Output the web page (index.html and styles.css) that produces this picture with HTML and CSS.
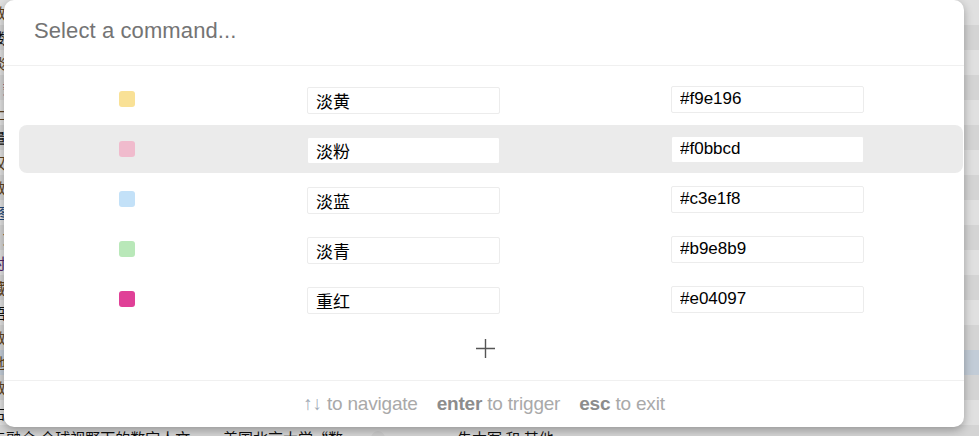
FILE: index.html
```html
<!DOCTYPE html>
<html lang="zh">
<head>
<meta charset="utf-8">
<title>Command palette</title>
<link rel="stylesheet" href="styles.css">
</head>
<body>
<div class="page">
  <div class="prow"><span class="c-title t-brown">数字人文研究方法与实践</span><span class="c-auth">王晓光</span><span class="c-dot"></span><span class="c-names">王晓光 和 其他</span></div>
  <div class="prow"><span class="c-title">[数据] 古籍文本挖掘</span><span class="c-auth">刘石</span><span class="c-dot"></span><span class="c-names">刘石</span></div>
  <div class="prow"><span class="c-title t-brown">淡化与重构：历史地理信息</span><span class="c-auth">陈刚</span><span class="c-dot"></span><span class="c-names">陈刚</span></div>
  <div class="prow"><span class="c-title t-purple">1 数字图书馆建设</span><span class="c-auth">赵生辉</span><span class="c-dot"></span><span class="c-names">赵生辉</span></div>
  <div class="prow"><span class="c-title t-brown">上海图书馆家谱知识服务</span><span class="c-auth">夏翠娟</span><span class="c-dot"></span><span class="c-names">夏翠娟</span></div>
  <div class="prow"><span class="c-title">量化历史研究导论</span><span class="c-auth">梁晨</span><span class="c-dot"></span><span class="c-names">梁晨</span></div>
  <div class="prow"><span class="c-title t-brown">汉字字形数据库</span><span class="c-auth">李国英</span><span class="c-dot"></span><span class="c-names">李国英</span></div>
  <div class="prow"><span class="c-title t-brown">数字人文视野下的文学</span><span class="c-auth">郑永晓</span><span class="c-dot"></span><span class="c-names">郑永晓</span></div>
  <div class="prow"><span class="c-title t-blue">[图] 古地图数字化</span><span class="c-auth">林宗毅</span><span class="c-dot"></span><span class="c-names">林宗毅</span></div>
  <div class="prow"><span class="c-title t-brown">1 文本计量与风格</span><span class="c-auth">黄水清</span><span class="c-dot"></span><span class="c-names">黄水清</span></div>
  <div class="prow"><span class="c-title t-purple">时空数据可视化</span><span class="c-auth">王军</span><span class="c-dot"></span><span class="c-names">王军 和 其他</span></div>
  <div class="prow"><span class="c-title t-brown">藏书印数据库</span><span class="c-auth">苏芳</span><span class="c-dot"></span><span class="c-names">苏芳</span></div>
  <div class="prow"><span class="c-title">语料库与社会网络</span><span class="c-auth">金观涛</span><span class="c-dot"></span><span class="c-names">金观涛</span></div>
  <div class="prow"><span class="c-title t-brown">数据驱动的人文研究</span><span class="c-auth">冯惠玲</span><span class="c-dot"></span><span class="c-names">冯惠玲</span></div>
  <div class="prow sel"><span class="c-title t-brown">地方志数字整理</span><span class="c-auth">包平</span><span class="c-dot"></span><span class="c-names">包平</span></div>
  <div class="prow"><span class="c-title t-brown">数字人文教育</span><span class="c-auth">朱本军</span><span class="c-dot"></span><span class="c-names">朱本军</span></div>
  <div class="prow"><span class="c-title">古典文献知识图谱</span><span class="c-auth">欧阳剑</span><span class="c-dot"></span><span class="c-names">欧阳剑</span></div>
  <div class="prow"><span class="c-title">与融合:全球视野下的数字人文</span><span class="c-auth">美国北京大学“数</span><span class="c-dot"></span><span class="c-names">朱本军 和 其他</span></div>
</div>
<div class="overlay"></div>

<div class="palette">
  <div class="pal-head">
    <input class="pal-input" type="text" placeholder="Select a command...">
  </div>
  <div class="pal-list">
    <div class="crow">
      <span class="swatch" style="background:#f9e196"></span>
      <input class="field field-name" type="text" value="淡黄">
      <input class="field" type="text" value="#f9e196">
    </div>
    <div class="crow active">
      <span class="swatch" style="background:#f0bbcd"></span>
      <input class="field field-name" type="text" value="淡粉">
      <input class="field" type="text" value="#f0bbcd">
    </div>
    <div class="crow">
      <span class="swatch" style="background:#c3e1f8"></span>
      <input class="field field-name" type="text" value="淡蓝">
      <input class="field" type="text" value="#c3e1f8">
    </div>
    <div class="crow">
      <span class="swatch" style="background:#b9e8b9"></span>
      <input class="field field-name" type="text" value="淡青">
      <input class="field" type="text" value="#b9e8b9">
    </div>
    <div class="crow">
      <span class="swatch" style="background:#e04097"></span>
      <input class="field field-name" type="text" value="重红">
      <input class="field" type="text" value="#e04097">
    </div>
    <div class="add">
      <svg class="plus" width="21" height="21" viewBox="0 0 21 21" aria-hidden="true">
        <path d="M10.5 1 V20 M1 10.5 H20" stroke="#555" stroke-width="1.4" fill="none"/>
      </svg>
    </div>
  </div>
  <div class="pal-foot">
    <span class="hint"><span class="arrows">↑↓</span> to navigate</span>
    <span class="hint"><b>enter</b> to trigger</span>
    <span class="hint"><b>esc</b> to exit</span>
  </div>
</div>
</body>
</html>
```

FILE: styles.css
```css
html, body {
  margin: 0;
  padding: 0;
}
body {
  width: 979px;
  height: 436px;
  overflow: hidden;
  position: relative;
  background: #ffffff;
  font-family: "Liberation Sans", "Noto Sans CJK SC", sans-serif;
}

/* background page */
.page {
  display: flex;
  flex-direction: column;
}
.prow {
  height: 25px;
  display: flex;
  align-items: center;
  white-space: nowrap;
  font-family: "Noto Sans CJK SC", sans-serif;
  font-size: 15px;
  color: #111;
}
.prow:nth-child(even) { background: #f2f2f2; }
.prow.sel { background: #dde9f5; }
.c-title {
  width: 232px;
  margin-left: -9px;
  overflow: hidden;
}
.t-brown { color: #6a4a22; }
.t-purple { color: #5a2a78; }
.t-blue { color: #24508a; }
.c-auth { width: 148px; }
.c-dot {
  width: 14px;
  height: 14px;
  border-radius: 50%;
  background: #e8e8e8;
  margin-right: 72px;
}
.overlay {
  position: absolute;
  inset: 0;
  background: rgba(0, 0, 0, 0.12);
}

/* palette */
.palette {
  position: absolute;
  left: 4px;
  top: 0;
  width: 960px;
  height: 427px;
  background: #fff;
  border-radius: 10px;
  box-shadow: 0 3px 10px rgba(0, 0, 0, 0.3);
  display: flex;
  flex-direction: column;
  overflow: hidden;
}
.pal-head {
  flex: none;
  height: 66px;
  box-sizing: border-box;
  padding: 0 30px 4px;
  border-bottom: 1px solid #f0f0f0;
  display: flex;
  align-items: center;
}
.pal-input {
  border: 0;
  outline: 0;
  padding: 0;
  width: 100%;
  font-family: "Liberation Sans", sans-serif;
  font-size: 22px;
  letter-spacing: 0.1px;
  color: #333;
  background: transparent;
}
.pal-input::placeholder { color: #747474; }

.pal-list {
  flex: none;
  padding: 9px 1px 9px 15px;
  display: flex;
  flex-direction: column;
  gap: 2px;
}
.crow {
  height: 48px;
  display: grid;
  grid-template-columns: 188px 364px 193px;
  align-items: center;
  padding-left: 100px;
  border-radius: 8px;
}
.crow.active { background: #ebebeb; }
.swatch {
  width: 16px;
  height: 16px;
  border-radius: 3px;
}
.field {
  width: 193px;
  height: 27px;
  box-sizing: border-box;
  border: 1px solid #ececec;
  border-radius: 2px;
  padding: 0 9px 0 8px;
  font-family: "Liberation Sans", "Noto Sans CJK SC", sans-serif;
  font-size: 17px;
  color: #000;
  background: #fff;
  outline: 0;
}
.field-name { margin-top: 3px; }
.crow.active .field { border-color: #ebebeb; }

.add {
  height: 46px;
  display: flex;
  align-items: center;
  justify-content: center;
  padding-right: 12px;
}

.pal-foot {
  flex: none;
  height: 47px;
  box-sizing: border-box;
  border-top: 1px solid #f0f0f0;
  display: flex;
  align-items: center;
  justify-content: center;
  gap: 19px;
  font-size: 19px;
  letter-spacing: -0.2px;
  color: #a9a9a9;
}
.hint b {
  font-weight: bold;
  color: #8c8c8c;
}
.arrows { color: #a3acb8; }
```
